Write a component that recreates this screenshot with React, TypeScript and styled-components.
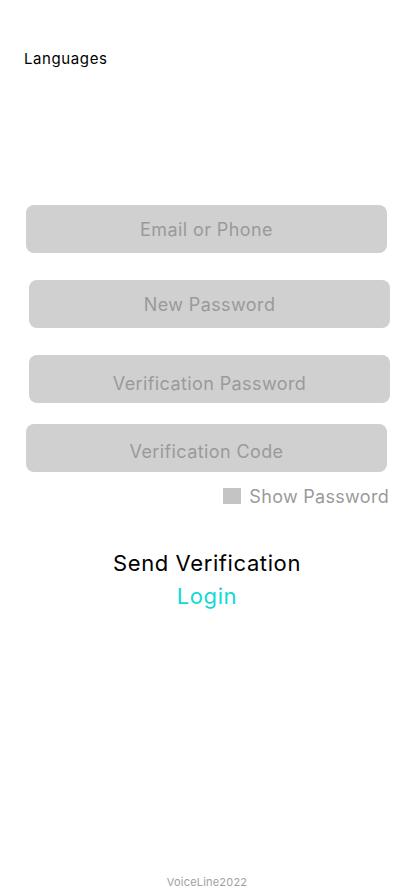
import React from "react";
import styled, { createGlobalStyle } from "styled-components";

const GlobalStyle = createGlobalStyle`
  html, body { margin: 0; padding: 0; background: #ffffff; }
  body { font-family: "Inter", "Noto Sans", sans-serif; }
  * { box-sizing: border-box; }
`;

const Page = styled.div`
  width: 414px;
  min-height: 896px;
  display: flex;
  flex-direction: column;
  background: #ffffff;
`;

const Header = styled.div`
  padding: 48px 0 0 24px;
  height: 205px;
`;

const LangLabel = styled.span`
  font-size: 15px;
  line-height: 18px;
  letter-spacing: 0.6px;
  color: #000;
`;

const Form = styled.div`
  display: flex;
  flex-direction: column;
`;

const Field = styled.input<{ $offset: number; $gap: number; $shift?: number }>`
  width: 361px;
  height: 48px;
  margin: ${(p) => p.$gap}px 0 0 ${(p) => p.$offset}px;
  border: none;
  border-radius: 8px;
  background: #d0d0d0;
  font-family: inherit;
  font-size: 18px;
  letter-spacing: 0.4px;
  text-align: center;
  color: #333;
  padding: ${(p) => p.$shift ?? 0}px 0 0 0;
  outline: none;
  &::placeholder { color: #9a9a9a; opacity: 1; }
`;

const ShowRow = styled.label`
  display: flex;
  align-items: center;
  justify-content: flex-end;
  gap: 8px;
  margin: 16px 25px 0 0;
  font-size: 18px;
  letter-spacing: 0.3px;
  color: #9a9a9a;
  height: 16px;
`;

const Box = styled.span`
  width: 18px;
  height: 16px;
  background: #c4c4c4;
`;

const Actions = styled.div`
  display: flex;
  flex-direction: column;
  align-items: center;
  margin-top: 47px;
  gap: 8px;
`;

const ActionText = styled.span<{ $color: string }>`
  font-size: 22px;
  line-height: 25px;
  letter-spacing: 0.6px;
  color: ${(p) => p.$color};
`;

const Spacer = styled.div`
  flex: 1;
`;

const Footer = styled.div`
  text-align: center;
  font-size: 11px;
  letter-spacing: 0.2px;
  color: #a0a0a0;
  padding-bottom: 7px;
`;

export default function App() {
  return (
    <Page>
      <GlobalStyle />
      <Header>
        <LangLabel>Languages</LangLabel>
      </Header>
      <Form>
        <Field $offset={26} $gap={0} placeholder="Email or Phone" />
        <Field $offset={29} $gap={27} placeholder="New Password" />
        <Field $offset={29} $gap={27} $shift={8} placeholder="Verification Password" />
        <Field $offset={26} $gap={21} $shift={6} placeholder="Verification Code" />
        <ShowRow>
          <Box />
          Show Password
        </ShowRow>
      </Form>
      <Actions>
        <ActionText $color="#000000">Send Verification</ActionText>
        <ActionText $color="#12d8d8">Login</ActionText>
      </Actions>
      <Spacer />
      <Footer>VoiceLine2022</Footer>
    </Page>
  );
}
